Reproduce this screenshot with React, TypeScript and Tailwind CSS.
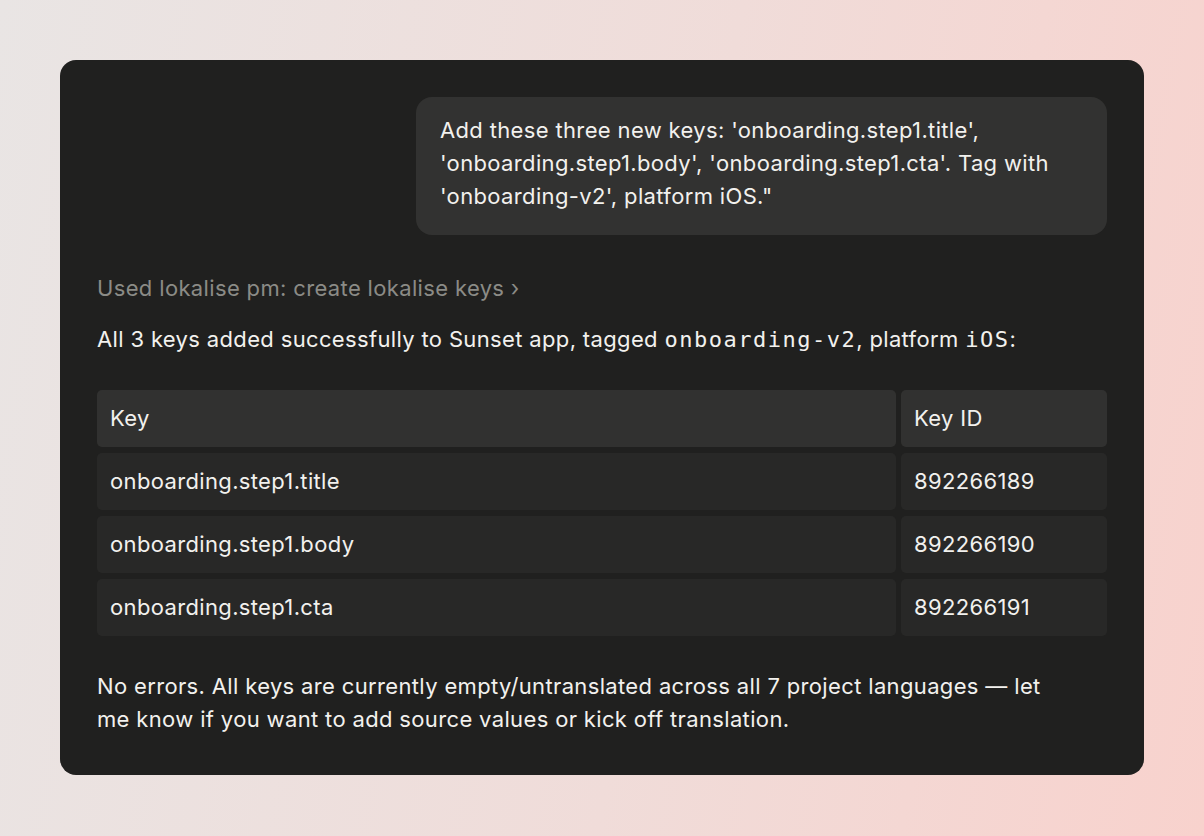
import React from "react";

const rows = [
  { key: "onboarding.step1.title", id: "892266189" },
  { key: "onboarding.step1.body", id: "892266190" },
  { key: "onboarding.step1.cta", id: "892266191" },
];

const mono = "font-['DejaVu_Sans_Mono',monospace] text-[22px] tracking-[1.5px]";

export default function App() {
  return (
    <div className="min-h-[836px] w-full bg-[linear-gradient(100deg,#e9e5e4_0%,#f0dcd9_55%,#f8d2cd_100%)] px-[60px] pt-[60px] pb-[61px] font-['Inter',sans-serif]">
      <div className="flex h-[715px] flex-col rounded-[16px] bg-[#20201f] px-[37px] pt-[37px] text-[22px] tracking-[0.35px] text-[#f2f1ee]">
        <div className="flex justify-end">
          <div className="w-[691px] rounded-[16px] bg-[#323231] px-6 pt-[17px] pb-[22px] leading-[33px]">
            Add these three new keys: 'onboarding.step1.title',
            'onboarding.step1.body', 'onboarding.step1.cta'. Tag with
            'onboarding-v2', platform iOS."
          </div>
        </div>

        <div className="mt-[38px] leading-[30px] text-[#8b8b86]">
          Used lokalise pm: create lokalise keys ›
        </div>

        <div className="mt-[21px] leading-[30px]">
          All 3 keys added successfully to Sunset app, tagged{" "}
          <span className={mono}>onboarding-v2</span>, platform{" "}
          <span className={mono}>iOS</span>:
        </div>

        <div className="mt-[35px] grid grid-cols-[799px_1fr] gap-x-[5px] gap-y-[6px]">
          <div className="flex h-[57px] items-center rounded-[5px] bg-[#313130] px-[13px]">
            Key
          </div>
          <div className="flex h-[57px] items-center rounded-[5px] bg-[#313130] px-[13px]">
            Key ID
          </div>
          {rows.map((r) => (
            <React.Fragment key={r.id}>
              <div className="flex h-[57px] items-center rounded-[5px] bg-[#282827] px-[13px]">
                {r.key}
              </div>
              <div className="flex h-[57px] items-center rounded-[5px] bg-[#282827] px-[13px]">
                {r.id}
              </div>
            </React.Fragment>
          ))}
        </div>

        <p className="mt-[34px] max-w-[975px] leading-[33px]">
          No errors. All keys are currently empty/untranslated across all 7
          project languages — let me know if you want to add source values or
          kick off translation.
        </p>
      </div>
    </div>
  );
}
